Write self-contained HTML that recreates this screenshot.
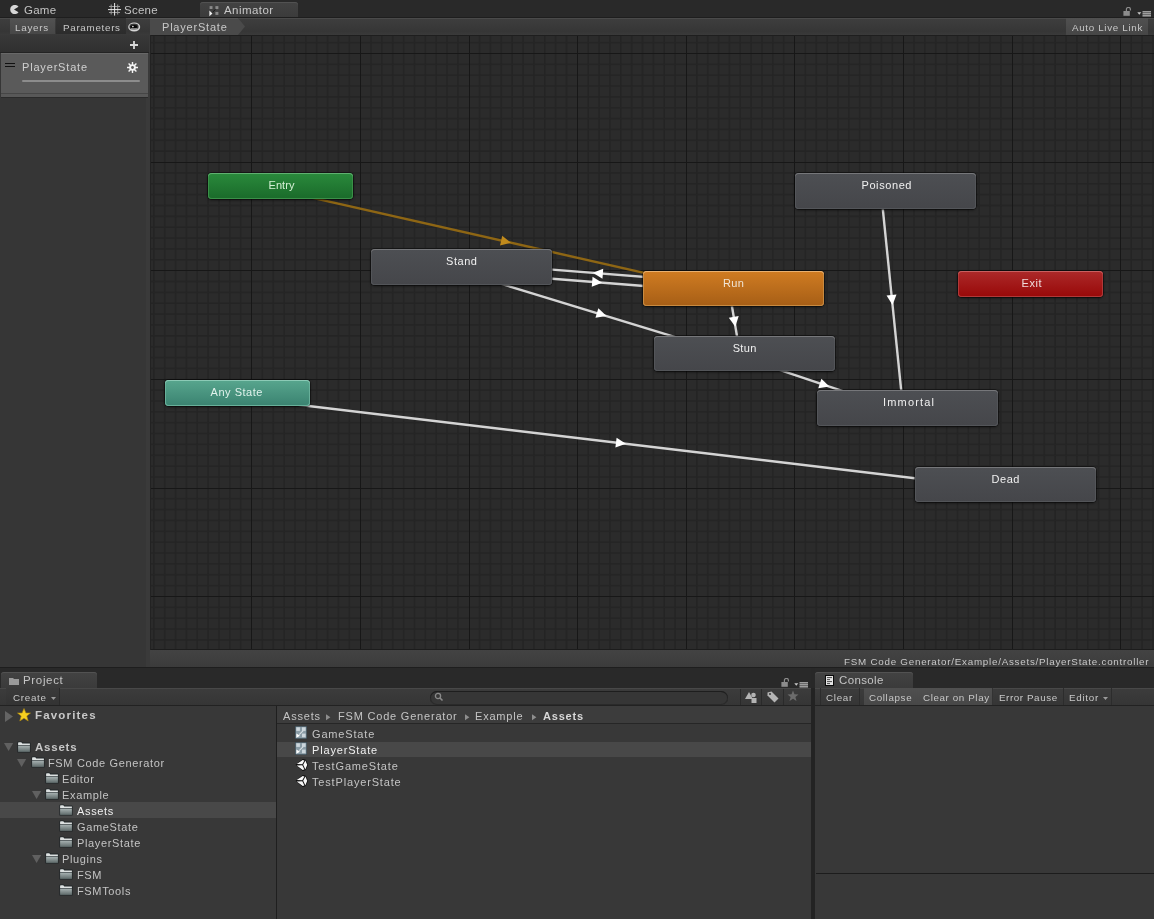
<!DOCTYPE html>
<html><head><meta charset="utf-8"><style>
html,body{margin:0;padding:0;}
body{width:1154px;height:919px;position:relative;overflow:hidden;background:#282828;font-family:"Liberation Sans", sans-serif;}
</style></head><body>
<div style="position:absolute;left:0px;top:0px;width:1154px;height:18px;background:#292929;"></div>
<div style="position:absolute;left:200px;top:2px;width:98px;height:16px;background:linear-gradient(#434343,#3b3b3b);border-radius:3px 3px 0 0;box-shadow:inset 0 1px 0 #525252;"></div>
<svg style="position:absolute;left:9px;top:5px" width="10" height="9" viewBox="0 0 10 9"><path d="M5 4.5 L9.5 1.8 A4.6 4.6 0 1 0 9.5 7.2 Z" fill="#d6d6d6"/></svg>
<div style="position:absolute;left:23.8px;top:4.67px;font-size:11.5px;line-height:11.5px;color:#c4c4c4;font-weight:normal;letter-spacing:0.257px;white-space:nowrap;will-change:transform;">Game</div>
<svg style="position:absolute;left:108px;top:3px" width="13" height="13" viewBox="0 0 13 13" fill="none"><path d="M3.2 1.5V11.5M9.7 1.5V11.5M1 3.5H12M1 9.5H12" stroke="#9a9a9a" stroke-width="1"/><path d="M6.6 0V12.6M0 6.6H13" stroke="#e6e6e6" stroke-width="1"/></svg>
<div style="position:absolute;left:123.7px;top:4.87px;font-size:11.5px;line-height:11.5px;color:#c4c4c4;font-weight:normal;letter-spacing:0.248px;white-space:nowrap;will-change:transform;">Scene</div>
<svg style="position:absolute;left:208.5px;top:6px" width="11" height="11" viewBox="0 0 11 11"><rect x="0.6" y="0.1" width="2.9" height="2.9" fill="#8a8a8a"/><rect x="6.4" y="0.1" width="3" height="3" fill="#8a8a8a"/><rect x="6.4" y="5.9" width="3" height="3" fill="#8a8a8a"/><path d="M6.5 3.4L3.6 6.2" stroke="#111" stroke-width="0.9"/><path d="M0.4 4.6L3.4 7.5L0.4 10.2Z" fill="#f0f0f0"/></svg>
<div style="position:absolute;left:223.8px;top:4.57px;font-size:11.5px;line-height:11.5px;color:#c8c8c8;font-weight:normal;letter-spacing:0.438px;white-space:nowrap;will-change:transform;">Animator</div>
<svg style="position:absolute;left:1123px;top:7px" width="9" height="9" viewBox="0 0 9 9"><path d="M3.4 4V2.4A2 2 0 0 1 7.4 2.4V3.4" stroke="#8c8c8c" stroke-width="1.2" fill="none"/><rect x="0.4" y="4" width="6.4" height="4.8" fill="#8c8c8c"/></svg>
<svg style="position:absolute;left:1137px;top:11px" width="15" height="6" viewBox="0 0 15 6"><path d="M0.3 1.2H4.3L2.3 3.8Z" fill="#c8c8c8"/><rect x="5.5" y="0.3" width="8.5" height="1.1" fill="#d0d0d0"/><rect x="5.5" y="2.3" width="8.5" height="1.1" fill="#d0d0d0"/><rect x="5.5" y="4.3" width="8.5" height="1.1" fill="#d0d0d0"/></svg>
<div style="position:absolute;left:0px;top:18px;width:1154px;height:17px;background:linear-gradient(#3e3e3e,#363636 80%,#3a3a3a);box-shadow:inset 0 1px 0 #4a4a4a;"></div>
<div style="position:absolute;left:0px;top:17px;width:1154px;height:1px;background:#1e1e1e;"></div>
<div style="position:absolute;left:0px;top:35px;width:1154px;height:1px;background:#1e1e1e;"></div>
<div style="position:absolute;left:10px;top:18px;width:45px;height:16px;background:linear-gradient(#525252,#474747);"></div>
<div style="position:absolute;left:15.3px;top:22.70px;font-size:9.8px;line-height:9.8px;color:#c8c8c8;font-weight:normal;letter-spacing:0.759px;white-space:nowrap;will-change:transform;">Layers</div>
<div style="position:absolute;left:56px;top:18px;width:70px;height:16px;background:linear-gradient(#333,#2c2c2c);"></div>
<div style="position:absolute;left:63.4px;top:22.70px;font-size:9.8px;line-height:9.8px;color:#c8c8c8;font-weight:normal;letter-spacing:0.707px;white-space:nowrap;will-change:transform;">Parameters</div>
<svg style="position:absolute;left:127.5px;top:21.5px" width="13" height="10" viewBox="0 0 13 10"><ellipse cx="6.2" cy="5" rx="6" ry="4.6" fill="#d4d4d4"/><ellipse cx="6" cy="4.8" rx="4.6" ry="3.2" fill="#3a3a3a"/><path d="M2.2 4.2Q6 2.4 8.8 3.6L9.3 5.6Q6 6.6 2.6 5.8Z" fill="#050505"/><circle cx="4.9" cy="4.6" r="0.8" fill="#fff"/><path d="M2.8 7H9.6M3.6 8.3H8.8" stroke="#d8d8d8" stroke-width="0.9"/></svg>
<div style="position:absolute;left:126px;top:18px;width:24px;height:16px;background:#2f2f2f;z-index:-1;"></div>
<svg style="position:absolute;left:150px;top:18px" width="96" height="17" viewBox="0 0 96 17"><path d="M0 0H88L95 8.5L88 17H0Z" fill="#4a4a4a"/><path d="M0 0.5H88" stroke="#565656"/></svg>
<div style="position:absolute;left:161.6px;top:21.89px;font-size:11px;line-height:11px;color:#c8c8c8;font-weight:normal;letter-spacing:0.792px;white-space:nowrap;will-change:transform;">PlayerState</div>
<div style="position:absolute;left:1066px;top:18px;width:82px;height:17px;background:linear-gradient(#505050,#464646);"></div>
<div style="position:absolute;left:1072px;top:22.50px;font-size:9.8px;line-height:9.8px;color:#c8c8c8;font-weight:normal;letter-spacing:0.673px;white-space:nowrap;will-change:transform;">Auto Live Link</div>
<div style="position:absolute;left:0px;top:35px;width:150px;height:633px;background:#363636;"></div>
<div style="position:absolute;left:146px;top:35px;width:4px;height:633px;background:#3a3a3a;"></div>
<div style="position:absolute;left:0px;top:35px;width:149px;height:17px;background:linear-gradient(#383838,#303030);"></div>
<div style="position:absolute;left:0px;top:52px;width:149px;height:1px;background:#232323;"></div>
<svg style="position:absolute;left:130px;top:41px" width="8" height="8" viewBox="0 0 8 8"><path d="M4 0V8M0 4H8" stroke="#d8d8d8" stroke-width="1.8"/></svg>
<div style="position:absolute;left:1px;top:53px;width:147px;height:44px;background:#5a5a5a;box-shadow:inset 0 1px 0 #686868;"></div>
<div style="position:absolute;left:1px;top:93px;width:147px;height:1px;background:#464646;"></div>
<div style="position:absolute;left:1px;top:94px;width:147px;height:3px;background:#585858;"></div>
<div style="position:absolute;left:1px;top:97px;width:147px;height:1px;background:#2a2a2a;"></div>
<div style="position:absolute;left:5px;top:63px;width:10px;height:1.2px;background:#111;"></div>
<div style="position:absolute;left:5px;top:65.8px;width:10px;height:1.2px;background:#111;"></div>
<div style="position:absolute;left:22.3px;top:61.99px;font-size:11px;line-height:11px;color:#d0d0d0;font-weight:normal;letter-spacing:0.822px;white-space:nowrap;will-change:transform;">PlayerState</div>
<svg style="position:absolute;left:127px;top:62px" width="11" height="11" viewBox="0 0 11 11"><g stroke="#f4f4f4" stroke-width="1.4"><path d="M5.5 0V11M0 5.5H11M1.6 1.6L9.4 9.4M9.4 1.6L1.6 9.4"/></g><circle cx="5.5" cy="5.5" r="3.3" fill="#f4f4f4"/><circle cx="5.5" cy="5.5" r="1.4" fill="#5a5a5a"/></svg>
<div style="position:absolute;left:22px;top:80px;width:118px;height:2.2px;background:#8c8c8c;border-radius:1px;"></div>
<div style="position:absolute;left:150px;top:35px;width:1px;height:615px;background:#222;"></div>
<svg style="position:absolute;left:150px;top:35px" width="1004" height="615"><rect width="1004" height="615" fill="#2b2b2b"/><rect x="3.06" y="0" width="1.5" height="615" fill="#252525"/><rect x="13.92" y="0" width="1.5" height="615" fill="#252525"/><rect x="24.78" y="0" width="1.5" height="615" fill="#252525"/><rect x="35.64" y="0" width="1.5" height="615" fill="#252525"/><rect x="46.50" y="0" width="1.5" height="615" fill="#252525"/><rect x="57.36" y="0" width="1.5" height="615" fill="#252525"/><rect x="68.22" y="0" width="1.5" height="615" fill="#252525"/><rect x="79.08" y="0" width="1.5" height="615" fill="#252525"/><rect x="89.94" y="0" width="1.5" height="615" fill="#252525"/><rect x="111.66" y="0" width="1.5" height="615" fill="#252525"/><rect x="122.52" y="0" width="1.5" height="615" fill="#252525"/><rect x="133.38" y="0" width="1.5" height="615" fill="#252525"/><rect x="144.24" y="0" width="1.5" height="615" fill="#252525"/><rect x="155.10" y="0" width="1.5" height="615" fill="#252525"/><rect x="165.96" y="0" width="1.5" height="615" fill="#252525"/><rect x="176.82" y="0" width="1.5" height="615" fill="#252525"/><rect x="187.68" y="0" width="1.5" height="615" fill="#252525"/><rect x="198.54" y="0" width="1.5" height="615" fill="#252525"/><rect x="220.26" y="0" width="1.5" height="615" fill="#252525"/><rect x="231.12" y="0" width="1.5" height="615" fill="#252525"/><rect x="241.98" y="0" width="1.5" height="615" fill="#252525"/><rect x="252.84" y="0" width="1.5" height="615" fill="#252525"/><rect x="263.70" y="0" width="1.5" height="615" fill="#252525"/><rect x="274.56" y="0" width="1.5" height="615" fill="#252525"/><rect x="285.42" y="0" width="1.5" height="615" fill="#252525"/><rect x="296.28" y="0" width="1.5" height="615" fill="#252525"/><rect x="307.14" y="0" width="1.5" height="615" fill="#252525"/><rect x="328.86" y="0" width="1.5" height="615" fill="#252525"/><rect x="339.72" y="0" width="1.5" height="615" fill="#252525"/><rect x="350.58" y="0" width="1.5" height="615" fill="#252525"/><rect x="361.44" y="0" width="1.5" height="615" fill="#252525"/><rect x="372.30" y="0" width="1.5" height="615" fill="#252525"/><rect x="383.16" y="0" width="1.5" height="615" fill="#252525"/><rect x="394.02" y="0" width="1.5" height="615" fill="#252525"/><rect x="404.88" y="0" width="1.5" height="615" fill="#252525"/><rect x="415.74" y="0" width="1.5" height="615" fill="#252525"/><rect x="437.46" y="0" width="1.5" height="615" fill="#252525"/><rect x="448.32" y="0" width="1.5" height="615" fill="#252525"/><rect x="459.18" y="0" width="1.5" height="615" fill="#252525"/><rect x="470.04" y="0" width="1.5" height="615" fill="#252525"/><rect x="480.90" y="0" width="1.5" height="615" fill="#252525"/><rect x="491.76" y="0" width="1.5" height="615" fill="#252525"/><rect x="502.62" y="0" width="1.5" height="615" fill="#252525"/><rect x="513.48" y="0" width="1.5" height="615" fill="#252525"/><rect x="524.34" y="0" width="1.5" height="615" fill="#252525"/><rect x="546.06" y="0" width="1.5" height="615" fill="#252525"/><rect x="556.92" y="0" width="1.5" height="615" fill="#252525"/><rect x="567.78" y="0" width="1.5" height="615" fill="#252525"/><rect x="578.64" y="0" width="1.5" height="615" fill="#252525"/><rect x="589.50" y="0" width="1.5" height="615" fill="#252525"/><rect x="600.36" y="0" width="1.5" height="615" fill="#252525"/><rect x="611.22" y="0" width="1.5" height="615" fill="#252525"/><rect x="622.08" y="0" width="1.5" height="615" fill="#252525"/><rect x="632.94" y="0" width="1.5" height="615" fill="#252525"/><rect x="654.66" y="0" width="1.5" height="615" fill="#252525"/><rect x="665.52" y="0" width="1.5" height="615" fill="#252525"/><rect x="676.38" y="0" width="1.5" height="615" fill="#252525"/><rect x="687.24" y="0" width="1.5" height="615" fill="#252525"/><rect x="698.10" y="0" width="1.5" height="615" fill="#252525"/><rect x="708.96" y="0" width="1.5" height="615" fill="#252525"/><rect x="719.82" y="0" width="1.5" height="615" fill="#252525"/><rect x="730.68" y="0" width="1.5" height="615" fill="#252525"/><rect x="741.54" y="0" width="1.5" height="615" fill="#252525"/><rect x="763.26" y="0" width="1.5" height="615" fill="#252525"/><rect x="774.12" y="0" width="1.5" height="615" fill="#252525"/><rect x="784.98" y="0" width="1.5" height="615" fill="#252525"/><rect x="795.84" y="0" width="1.5" height="615" fill="#252525"/><rect x="806.70" y="0" width="1.5" height="615" fill="#252525"/><rect x="817.56" y="0" width="1.5" height="615" fill="#252525"/><rect x="828.42" y="0" width="1.5" height="615" fill="#252525"/><rect x="839.28" y="0" width="1.5" height="615" fill="#252525"/><rect x="850.14" y="0" width="1.5" height="615" fill="#252525"/><rect x="871.86" y="0" width="1.5" height="615" fill="#252525"/><rect x="882.72" y="0" width="1.5" height="615" fill="#252525"/><rect x="893.58" y="0" width="1.5" height="615" fill="#252525"/><rect x="904.44" y="0" width="1.5" height="615" fill="#252525"/><rect x="915.30" y="0" width="1.5" height="615" fill="#252525"/><rect x="926.16" y="0" width="1.5" height="615" fill="#252525"/><rect x="937.02" y="0" width="1.5" height="615" fill="#252525"/><rect x="947.88" y="0" width="1.5" height="615" fill="#252525"/><rect x="958.74" y="0" width="1.5" height="615" fill="#252525"/><rect x="980.46" y="0" width="1.5" height="615" fill="#252525"/><rect x="991.32" y="0" width="1.5" height="615" fill="#252525"/><rect x="1002.18" y="0" width="1.5" height="615" fill="#252525"/><rect x="0" y="6.84" width="1004" height="1.5" fill="#252525"/><rect x="0" y="28.56" width="1004" height="1.5" fill="#252525"/><rect x="0" y="39.42" width="1004" height="1.5" fill="#252525"/><rect x="0" y="50.28" width="1004" height="1.5" fill="#252525"/><rect x="0" y="61.14" width="1004" height="1.5" fill="#252525"/><rect x="0" y="72.00" width="1004" height="1.5" fill="#252525"/><rect x="0" y="82.86" width="1004" height="1.5" fill="#252525"/><rect x="0" y="93.72" width="1004" height="1.5" fill="#252525"/><rect x="0" y="104.58" width="1004" height="1.5" fill="#252525"/><rect x="0" y="115.44" width="1004" height="1.5" fill="#252525"/><rect x="0" y="137.16" width="1004" height="1.5" fill="#252525"/><rect x="0" y="148.02" width="1004" height="1.5" fill="#252525"/><rect x="0" y="158.88" width="1004" height="1.5" fill="#252525"/><rect x="0" y="169.74" width="1004" height="1.5" fill="#252525"/><rect x="0" y="180.60" width="1004" height="1.5" fill="#252525"/><rect x="0" y="191.46" width="1004" height="1.5" fill="#252525"/><rect x="0" y="202.32" width="1004" height="1.5" fill="#252525"/><rect x="0" y="213.18" width="1004" height="1.5" fill="#252525"/><rect x="0" y="224.04" width="1004" height="1.5" fill="#252525"/><rect x="0" y="245.76" width="1004" height="1.5" fill="#252525"/><rect x="0" y="256.62" width="1004" height="1.5" fill="#252525"/><rect x="0" y="267.48" width="1004" height="1.5" fill="#252525"/><rect x="0" y="278.34" width="1004" height="1.5" fill="#252525"/><rect x="0" y="289.20" width="1004" height="1.5" fill="#252525"/><rect x="0" y="300.06" width="1004" height="1.5" fill="#252525"/><rect x="0" y="310.92" width="1004" height="1.5" fill="#252525"/><rect x="0" y="321.78" width="1004" height="1.5" fill="#252525"/><rect x="0" y="332.64" width="1004" height="1.5" fill="#252525"/><rect x="0" y="354.36" width="1004" height="1.5" fill="#252525"/><rect x="0" y="365.22" width="1004" height="1.5" fill="#252525"/><rect x="0" y="376.08" width="1004" height="1.5" fill="#252525"/><rect x="0" y="386.94" width="1004" height="1.5" fill="#252525"/><rect x="0" y="397.80" width="1004" height="1.5" fill="#252525"/><rect x="0" y="408.66" width="1004" height="1.5" fill="#252525"/><rect x="0" y="419.52" width="1004" height="1.5" fill="#252525"/><rect x="0" y="430.38" width="1004" height="1.5" fill="#252525"/><rect x="0" y="441.24" width="1004" height="1.5" fill="#252525"/><rect x="0" y="462.96" width="1004" height="1.5" fill="#252525"/><rect x="0" y="473.82" width="1004" height="1.5" fill="#252525"/><rect x="0" y="484.68" width="1004" height="1.5" fill="#252525"/><rect x="0" y="495.54" width="1004" height="1.5" fill="#252525"/><rect x="0" y="506.40" width="1004" height="1.5" fill="#252525"/><rect x="0" y="517.26" width="1004" height="1.5" fill="#252525"/><rect x="0" y="528.12" width="1004" height="1.5" fill="#252525"/><rect x="0" y="538.98" width="1004" height="1.5" fill="#252525"/><rect x="0" y="549.84" width="1004" height="1.5" fill="#252525"/><rect x="0" y="571.56" width="1004" height="1.5" fill="#252525"/><rect x="0" y="582.42" width="1004" height="1.5" fill="#252525"/><rect x="0" y="593.28" width="1004" height="1.5" fill="#252525"/><rect x="0" y="604.14" width="1004" height="1.5" fill="#252525"/><rect x="101" y="0" width="1" height="615" fill="#171717"/><rect x="210" y="0" width="1" height="615" fill="#171717"/><rect x="319" y="0" width="1" height="615" fill="#171717"/><rect x="427" y="0" width="1" height="615" fill="#171717"/><rect x="536" y="0" width="1" height="615" fill="#171717"/><rect x="644" y="0" width="1" height="615" fill="#171717"/><rect x="753" y="0" width="1" height="615" fill="#171717"/><rect x="862" y="0" width="1" height="615" fill="#171717"/><rect x="970" y="0" width="1" height="615" fill="#171717"/><rect x="0" y="18" width="1004" height="1" fill="#171717"/><rect x="0" y="127" width="1004" height="1" fill="#171717"/><rect x="0" y="235" width="1004" height="1" fill="#171717"/><rect x="0" y="344" width="1004" height="1" fill="#171717"/><rect x="0" y="453" width="1004" height="1" fill="#171717"/><rect x="0" y="561" width="1004" height="1" fill="#171717"/><rect x="0" y="614" width="1004" height="1" fill="#1c1c1c"/><rect x="0" y="0" width="1004" height="1" fill="#1e1e1e"/><rect x="0" y="0" width="1" height="615" fill="#222"/><line x1="129.51" y1="155.39" x2="582.51" y2="257.89" stroke="#8e6614" stroke-width="2.4"/><path d="M360.88 207.74L350.03 210.41L352.23 200.66Z" fill="#c08a1c"/><line x1="311.15" y1="236.49" x2="583.15" y2="257.99" stroke="#d4d4d4" stroke-width="2.4"/><path d="M452.13 247.63L441.77 251.83L442.55 241.86Z" fill="#ffffff"/><line x1="583.85" y1="249.01" x2="311.85" y2="227.51" stroke="#d4d4d4" stroke-width="2.4"/><path d="M442.87 237.87L453.23 233.67L452.45 243.64Z" fill="#ffffff"/><line x1="310.18" y1="236.30" x2="593.18" y2="322.80" stroke="#d4d4d4" stroke-width="2.4"/><path d="M456.47 281.01L445.44 282.87L448.36 273.31Z" fill="#ffffff"/><line x1="579.06" y1="254.25" x2="590.06" y2="319.25" stroke="#d4d4d4" stroke-width="2.4"/><path d="M585.40 291.68L578.80 282.66L588.66 280.99Z" fill="#ffffff"/><line x1="593.07" y1="322.77" x2="756.07" y2="377.27" stroke="#d4d4d4" stroke-width="2.4"/><path d="M679.32 351.60L668.25 353.17L671.42 343.69Z" fill="#ffffff"/><line x1="731.02" y1="156.45" x2="753.02" y2="373.45" stroke="#d4d4d4" stroke-width="2.4"/><path d="M742.53 269.93L736.54 260.48L746.49 259.48Z" fill="#ffffff"/><line x1="86.97" y1="362.47" x2="854.97" y2="453.97" stroke="#d4d4d4" stroke-width="2.4"/><path d="M475.93 408.81L465.41 412.59L466.59 402.66Z" fill="#ffffff"/></svg>
<div style="position:absolute;left:208px;top:173px;width:145px;height:26px;background:linear-gradient(#2a8a3c,#1a6a2a);border-radius:4px;box-shadow:0 0 0 1px rgba(0,0,0,0.35),0 1px 3px rgba(0,0,0,0.6),inset 0 1px 0 #60b070,inset 1px 0 0 #3a9048,inset -1px 0 0 #3a9048,inset 0 -1px 0 #3a9048;"></div>
<div style="position:absolute;left:208.9px;width:145px;top:179.99px;font-size:11px;line-height:11px;color:#d4f0d4;font-weight:normal;letter-spacing:0.053px;white-space:nowrap;will-change:transform;text-align:center;text-indent:0.053px;">Entry</div>
<div style="position:absolute;left:165px;top:380px;width:145px;height:26px;background:linear-gradient(#58a68e,#3a8270);border-radius:4px;box-shadow:0 0 0 1px rgba(0,0,0,0.35),0 1px 3px rgba(0,0,0,0.6),inset 0 1px 0 #8ccab6,inset 1px 0 0 #68b09a,inset -1px 0 0 #68b09a,inset 0 -1px 0 #68b09a;"></div>
<div style="position:absolute;left:164.0px;width:145px;top:386.99px;font-size:11px;line-height:11px;color:#e0f2ec;font-weight:normal;letter-spacing:0.525px;white-space:nowrap;will-change:transform;text-align:center;text-indent:0.525px;">Any State</div>
<div style="position:absolute;left:958px;top:271px;width:145px;height:26px;background:linear-gradient(#ac2a2a,#980808);border-radius:4px;box-shadow:0 0 0 1px rgba(0,0,0,0.35),0 1px 3px rgba(0,0,0,0.6),inset 0 1px 0 #c86060,inset 1px 0 0 #b03838,inset -1px 0 0 #b03838,inset 0 -1px 0 #b03838;"></div>
<div style="position:absolute;left:958.9px;width:145px;top:277.99px;font-size:11px;line-height:11px;color:#f0dcdc;font-weight:normal;letter-spacing:0.552px;white-space:nowrap;will-change:transform;text-align:center;text-indent:0.552px;">Exit</div>
<div style="position:absolute;left:371px;top:249px;width:181px;height:36px;background:linear-gradient(#4d4f53,#45464a);border-radius:4px;box-shadow:0 0 0 1px rgba(0,0,0,0.35),0 1px 3px rgba(0,0,0,0.6),inset 0 1px 0 #76777a,inset 1px 0 0 #535559,inset -1px 0 0 #535559,inset 0 -1px 0 #535559;"></div>
<div style="position:absolute;left:371px;width:181px;top:255.99px;font-size:11px;line-height:11px;color:#f0f0f0;font-weight:normal;letter-spacing:0.537px;white-space:nowrap;will-change:transform;text-align:center;text-indent:0.537px;">Stand</div>
<div style="position:absolute;left:643px;top:271px;width:181px;height:35px;background:linear-gradient(#d07c22,#a65e16);border-radius:4px;box-shadow:0 0 0 1px rgba(0,0,0,0.35),0 1px 3px rgba(0,0,0,0.6),inset 0 1px 0 #e8b070,inset 1px 0 0 #c88a40,inset -1px 0 0 #c88a40,inset 0 -1px 0 #c88a40;"></div>
<div style="position:absolute;left:643px;width:181px;top:277.99px;font-size:11px;line-height:11px;color:#f0e4d4;font-weight:normal;letter-spacing:0.406px;white-space:nowrap;will-change:transform;text-align:center;text-indent:0.406px;">Run</div>
<div style="position:absolute;left:654px;top:336px;width:181px;height:35px;background:linear-gradient(#4d4f53,#45464a);border-radius:4px;box-shadow:0 0 0 1px rgba(0,0,0,0.35),0 1px 3px rgba(0,0,0,0.6),inset 0 1px 0 #76777a,inset 1px 0 0 #535559,inset -1px 0 0 #535559,inset 0 -1px 0 #535559;"></div>
<div style="position:absolute;left:654px;width:181px;top:342.99px;font-size:11px;line-height:11px;color:#f0f0f0;font-weight:normal;letter-spacing:0.32px;white-space:nowrap;will-change:transform;text-align:center;text-indent:0.32px;">Stun</div>
<div style="position:absolute;left:795px;top:173px;width:181px;height:36px;background:linear-gradient(#4d4f53,#45464a);border-radius:4px;box-shadow:0 0 0 1px rgba(0,0,0,0.35),0 1px 3px rgba(0,0,0,0.6),inset 0 1px 0 #76777a,inset 1px 0 0 #535559,inset -1px 0 0 #535559,inset 0 -1px 0 #535559;"></div>
<div style="position:absolute;left:796.0px;width:181px;top:179.99px;font-size:11px;line-height:11px;color:#f0f0f0;font-weight:normal;letter-spacing:0.589px;white-space:nowrap;will-change:transform;text-align:center;text-indent:0.589px;">Poisoned</div>
<div style="position:absolute;left:817px;top:390px;width:181px;height:36px;background:linear-gradient(#4d4f53,#45464a);border-radius:4px;box-shadow:0 0 0 1px rgba(0,0,0,0.35),0 1px 3px rgba(0,0,0,0.6),inset 0 1px 0 #76777a,inset 1px 0 0 #535559,inset -1px 0 0 #535559,inset 0 -1px 0 #535559;"></div>
<div style="position:absolute;left:817.8px;width:181px;top:396.99px;font-size:11px;line-height:11px;color:#f0f0f0;font-weight:normal;letter-spacing:1.174px;white-space:nowrap;will-change:transform;text-align:center;text-indent:1.174px;">Immortal</div>
<div style="position:absolute;left:915px;top:467px;width:181px;height:35px;background:linear-gradient(#4d4f53,#45464a);border-radius:4px;box-shadow:0 0 0 1px rgba(0,0,0,0.35),0 1px 3px rgba(0,0,0,0.6),inset 0 1px 0 #76777a,inset 1px 0 0 #535559,inset -1px 0 0 #535559,inset 0 -1px 0 #535559;"></div>
<div style="position:absolute;left:915px;width:181px;top:473.99px;font-size:11px;line-height:11px;color:#f0f0f0;font-weight:normal;letter-spacing:0.534px;white-space:nowrap;will-change:transform;text-align:center;text-indent:0.534px;">Dead</div>
<div style="position:absolute;left:150px;top:650px;width:1004px;height:18px;background:linear-gradient(#434343,#3b3b3b);"></div>
<div style="position:absolute;right:5.144px;top:656.70px;font-size:9.8px;line-height:9.8px;color:#c8c8c8;font-weight:normal;letter-spacing:0.756px;white-space:nowrap;will-change:transform;text-align:right;">FSM Code Generator/Example/Assets/PlayerState.controller</div>
<div style="position:absolute;left:0px;top:668px;width:1154px;height:20px;background:#292929;"></div>
<div style="position:absolute;left:0px;top:667px;width:1154px;height:1px;background:#1e1e1e;"></div>
<div style="position:absolute;left:1px;top:672px;width:96px;height:16px;background:linear-gradient(#434343,#3b3b3b);border-radius:3px 3px 0 0;box-shadow:inset 0 1px 0 #525252;"></div>
<svg style="position:absolute;left:9px;top:677px" width="10" height="8" viewBox="0 0 10 8"><path d="M0 1H4L5 2H10V8H0Z" fill="#9a9a9a"/></svg>
<div style="position:absolute;left:23.4px;top:674.97px;font-size:11.5px;line-height:11.5px;color:#c4c4c4;font-weight:normal;letter-spacing:0.667px;white-space:nowrap;will-change:transform;">Project</div>
<div style="position:absolute;left:815px;top:672px;width:98px;height:16px;background:linear-gradient(#434343,#3b3b3b);border-radius:3px 3px 0 0;box-shadow:inset 0 1px 0 #525252;"></div>
<svg style="position:absolute;left:825px;top:675px" width="9" height="11" viewBox="0 0 9 11"><rect x="0" y="0" width="9" height="11" fill="#0a0a0a"/><rect x="1" y="1" width="7" height="9" fill="#e4e4e4"/><path d="M2 2.6H7M2 4.6H5M2 6.6H7M2 8.6H5" stroke="#3a3a3a" stroke-width="0.9"/></svg>
<div style="position:absolute;left:838.6px;top:675.17px;font-size:11.5px;line-height:11.5px;color:#c4c4c4;font-weight:normal;letter-spacing:0.366px;white-space:nowrap;will-change:transform;">Console</div>
<svg style="position:absolute;left:781px;top:678px" width="9" height="9" viewBox="0 0 9 9"><path d="M3.4 4V2.4A2 2 0 0 1 7.4 2.4V3.4" stroke="#8c8c8c" stroke-width="1.2" fill="none"/><rect x="0.4" y="4" width="6.4" height="4.8" fill="#8c8c8c"/></svg>
<svg style="position:absolute;left:794px;top:682px" width="15" height="6" viewBox="0 0 15 6"><path d="M0.3 1.2H4.3L2.3 3.8Z" fill="#c8c8c8"/><rect x="5.5" y="0.3" width="8.5" height="1.1" fill="#d0d0d0"/><rect x="5.5" y="2.3" width="8.5" height="1.1" fill="#d0d0d0"/><rect x="5.5" y="4.3" width="8.5" height="1.1" fill="#d0d0d0"/></svg>
<div style="position:absolute;left:0px;top:688px;width:811px;height:18px;background:linear-gradient(#3c3c3c,#353535);box-shadow:inset 0 1px 0 #484848;"></div>
<div style="position:absolute;left:0px;top:705px;width:811px;height:1px;background:#222;"></div>
<div style="position:absolute;left:6px;top:688px;width:53px;height:17px;background:linear-gradient(#3a3a3a,#333);border-right:1px solid #2a2a2a;"></div>
<div style="position:absolute;left:12.5px;top:693.40px;font-size:9.8px;line-height:9.8px;color:#c8c8c8;font-weight:normal;letter-spacing:0.719px;white-space:nowrap;will-change:transform;">Create</div>
<svg style="position:absolute;left:51px;top:697px" width="5" height="3" viewBox="0 0 5 3"><path d="M0 0H5L2.5 3Z" fill="#9a9a9a"/></svg>
<div style="position:absolute;left:430px;top:691px;width:298px;height:14px;background:#363636;border-radius:7px;box-shadow:inset 0 1px 0 #1e1e1e,inset 0 0 0 1px #2a2a2a;"></div>
<svg style="position:absolute;left:434px;top:692px" width="10" height="10" viewBox="0 0 10 10"><circle cx="4" cy="4" r="2.6" stroke="#8a8a8a" stroke-width="1.3" fill="none"/><path d="M6 6L8.5 8.5" stroke="#8a8a8a" stroke-width="1.6"/></svg>
<div style="position:absolute;left:740px;top:689px;width:1px;height:16px;background:#2a2a2a;"></div>
<div style="position:absolute;left:761px;top:689px;width:1px;height:16px;background:#2a2a2a;"></div>
<div style="position:absolute;left:783px;top:689px;width:1px;height:16px;background:#2a2a2a;"></div>
<svg style="position:absolute;left:745px;top:691px" width="12" height="12" viewBox="0 0 12 12"><path d="M4 1L0 8H8Z" fill="#b4b4b4"/><circle cx="8.5" cy="4" r="2.3" fill="#b4b4b4"/><rect x="6.5" y="7" width="5" height="5" fill="#b4b4b4"/></svg>
<svg style="position:absolute;left:767px;top:691px" width="12" height="12" viewBox="0 0 12 12"><path d="M0.5 1.5L4.5 0.5L11.5 7.5L7.5 11.5L0.5 4.5Z" fill="#b4b4b4"/><circle cx="3" cy="3" r="1" fill="#3a3a3a"/></svg>
<svg style="position:absolute;left:787px;top:690px" width="12" height="12" viewBox="0 0 12 12"><path d="M6 0.5L7.5 4.3L11.5 4.5L8.4 7L9.5 11L6 8.7L2.5 11L3.6 7L0.5 4.5L4.5 4.3Z" fill="#6c6c6c"/></svg>
<div style="position:absolute;left:0px;top:706px;width:276px;height:213px;background:#383838;"></div>
<div style="position:absolute;left:276px;top:706px;width:1px;height:213px;background:#1f1f1f;"></div>
<svg width="0" height="0" style="position:absolute"><defs><linearGradient id="fg" x1="0" y1="0" x2="0" y2="1"><stop offset="0" stop-color="#a8b2b2"/><stop offset="1" stop-color="#5e6a6a"/></linearGradient></defs></svg>
<svg style="position:absolute;left:5px;top:711px" width="9" height="11" viewBox="0 0 9 11"><path d="M0 0L8 5.5L0 11Z" fill="#646464"/></svg>
<svg style="position:absolute;left:17px;top:708px" width="14" height="14" viewBox="0 0 14 14"><path d="M7 0.5L8.9 5H13.5L9.8 8L11.2 13L7 10.2L2.8 13L4.2 8L0.5 5H5.1Z" fill="#f6d020" stroke="#b08a10" stroke-width="0.6"/></svg>
<div style="position:absolute;left:34.7px;top:710.47px;font-size:11.5px;line-height:11.5px;color:#c8c8c8;font-weight:bold;letter-spacing:1.182px;white-space:nowrap;will-change:transform;">Favorites</div>
<svg style="position:absolute;left:3.5px;top:743.2px" width="10" height="9" viewBox="0 0 10 9"><path d="M0 0H9.2L4.6 8Z" fill="#606060"/></svg>
<svg style="position:absolute;left:16.8px;top:740.5px" width="14" height="12" viewBox="0 0 14 12"><path d="M0.4 1.8Q0.4 0.6 1.6 0.6H4.6L5.6 1.6H12.6Q13.6 1.6 13.6 2.6V11.6H0.4Z" fill="#1e2426"/><path d="M1.1 1.9Q1.1 1.3 1.8 1.3H4.3L5.3 2.4H12.9V4H1.1Z" fill="#dde1e1"/><rect x="1.1" y="4" width="11.8" height="0.7" fill="#4a5456"/><rect x="1.1" y="4.7" width="11.8" height="6.2" fill="url(#fg)"/></svg>
<div style="position:absolute;left:34.7px;top:741.77px;font-size:11.5px;line-height:11.5px;color:#c8c8c8;font-weight:bold;letter-spacing:0.776px;white-space:nowrap;will-change:transform;">Assets</div>
<div style="position:absolute;left:0px;top:802px;width:276px;height:16px;background:#484848;"></div>
<svg style="position:absolute;left:17.3px;top:759.2px" width="10" height="9" viewBox="0 0 10 9"><path d="M0 0H9.2L4.6 8Z" fill="#606060"/></svg>
<svg style="position:absolute;left:30.7px;top:756.2px" width="14" height="12" viewBox="0 0 14 12"><path d="M0.4 1.8Q0.4 0.6 1.6 0.6H4.6L5.6 1.6H12.6Q13.6 1.6 13.6 2.6V11.6H0.4Z" fill="#1e2426"/><path d="M1.1 1.9Q1.1 1.3 1.8 1.3H4.3L5.3 2.4H12.9V4H1.1Z" fill="#dde1e1"/><rect x="1.1" y="4" width="11.8" height="0.7" fill="#4a5456"/><rect x="1.1" y="4.7" width="11.8" height="6.2" fill="url(#fg)"/></svg>
<div style="position:absolute;left:48px;top:757.69px;font-size:11px;line-height:11px;color:#c4c4c4;font-weight:normal;letter-spacing:0.65px;white-space:nowrap;will-change:transform;">FSM Code Generator</div>
<svg style="position:absolute;left:44.7px;top:772.2px" width="14" height="12" viewBox="0 0 14 12"><path d="M0.4 1.8Q0.4 0.6 1.6 0.6H4.6L5.6 1.6H12.6Q13.6 1.6 13.6 2.6V11.6H0.4Z" fill="#1e2426"/><path d="M1.1 1.9Q1.1 1.3 1.8 1.3H4.3L5.3 2.4H12.9V4H1.1Z" fill="#dde1e1"/><rect x="1.1" y="4" width="11.8" height="0.7" fill="#4a5456"/><rect x="1.1" y="4.7" width="11.8" height="6.2" fill="url(#fg)"/></svg>
<div style="position:absolute;left:62px;top:773.69px;font-size:11px;line-height:11px;color:#c4c4c4;font-weight:normal;letter-spacing:0.65px;white-space:nowrap;will-change:transform;">Editor</div>
<svg style="position:absolute;left:32.3px;top:791.2px" width="10" height="9" viewBox="0 0 10 9"><path d="M0 0H9.2L4.6 8Z" fill="#606060"/></svg>
<svg style="position:absolute;left:44.7px;top:788.2px" width="14" height="12" viewBox="0 0 14 12"><path d="M0.4 1.8Q0.4 0.6 1.6 0.6H4.6L5.6 1.6H12.6Q13.6 1.6 13.6 2.6V11.6H0.4Z" fill="#1e2426"/><path d="M1.1 1.9Q1.1 1.3 1.8 1.3H4.3L5.3 2.4H12.9V4H1.1Z" fill="#dde1e1"/><rect x="1.1" y="4" width="11.8" height="0.7" fill="#4a5456"/><rect x="1.1" y="4.7" width="11.8" height="6.2" fill="url(#fg)"/></svg>
<div style="position:absolute;left:62px;top:789.69px;font-size:11px;line-height:11px;color:#c4c4c4;font-weight:normal;letter-spacing:0.65px;white-space:nowrap;will-change:transform;">Example</div>
<svg style="position:absolute;left:58.7px;top:804.2px" width="14" height="12" viewBox="0 0 14 12"><path d="M0.4 1.8Q0.4 0.6 1.6 0.6H4.6L5.6 1.6H12.6Q13.6 1.6 13.6 2.6V11.6H0.4Z" fill="#1e2426"/><path d="M1.1 1.9Q1.1 1.3 1.8 1.3H4.3L5.3 2.4H12.9V4H1.1Z" fill="#dde1e1"/><rect x="1.1" y="4" width="11.8" height="0.7" fill="#4a5456"/><rect x="1.1" y="4.7" width="11.8" height="6.2" fill="url(#fg)"/></svg>
<div style="position:absolute;left:77px;top:805.69px;font-size:11px;line-height:11px;color:#f0f0f0;font-weight:normal;letter-spacing:0.65px;white-space:nowrap;will-change:transform;">Assets</div>
<svg style="position:absolute;left:58.7px;top:820.2px" width="14" height="12" viewBox="0 0 14 12"><path d="M0.4 1.8Q0.4 0.6 1.6 0.6H4.6L5.6 1.6H12.6Q13.6 1.6 13.6 2.6V11.6H0.4Z" fill="#1e2426"/><path d="M1.1 1.9Q1.1 1.3 1.8 1.3H4.3L5.3 2.4H12.9V4H1.1Z" fill="#dde1e1"/><rect x="1.1" y="4" width="11.8" height="0.7" fill="#4a5456"/><rect x="1.1" y="4.7" width="11.8" height="6.2" fill="url(#fg)"/></svg>
<div style="position:absolute;left:77px;top:821.69px;font-size:11px;line-height:11px;color:#c4c4c4;font-weight:normal;letter-spacing:0.65px;white-space:nowrap;will-change:transform;">GameState</div>
<svg style="position:absolute;left:58.7px;top:836.2px" width="14" height="12" viewBox="0 0 14 12"><path d="M0.4 1.8Q0.4 0.6 1.6 0.6H4.6L5.6 1.6H12.6Q13.6 1.6 13.6 2.6V11.6H0.4Z" fill="#1e2426"/><path d="M1.1 1.9Q1.1 1.3 1.8 1.3H4.3L5.3 2.4H12.9V4H1.1Z" fill="#dde1e1"/><rect x="1.1" y="4" width="11.8" height="0.7" fill="#4a5456"/><rect x="1.1" y="4.7" width="11.8" height="6.2" fill="url(#fg)"/></svg>
<div style="position:absolute;left:77px;top:837.69px;font-size:11px;line-height:11px;color:#c4c4c4;font-weight:normal;letter-spacing:0.65px;white-space:nowrap;will-change:transform;">PlayerState</div>
<svg style="position:absolute;left:32.3px;top:855.2px" width="10" height="9" viewBox="0 0 10 9"><path d="M0 0H9.2L4.6 8Z" fill="#606060"/></svg>
<svg style="position:absolute;left:44.7px;top:852.2px" width="14" height="12" viewBox="0 0 14 12"><path d="M0.4 1.8Q0.4 0.6 1.6 0.6H4.6L5.6 1.6H12.6Q13.6 1.6 13.6 2.6V11.6H0.4Z" fill="#1e2426"/><path d="M1.1 1.9Q1.1 1.3 1.8 1.3H4.3L5.3 2.4H12.9V4H1.1Z" fill="#dde1e1"/><rect x="1.1" y="4" width="11.8" height="0.7" fill="#4a5456"/><rect x="1.1" y="4.7" width="11.8" height="6.2" fill="url(#fg)"/></svg>
<div style="position:absolute;left:62px;top:853.69px;font-size:11px;line-height:11px;color:#c4c4c4;font-weight:normal;letter-spacing:0.65px;white-space:nowrap;will-change:transform;">Plugins</div>
<svg style="position:absolute;left:58.7px;top:868.2px" width="14" height="12" viewBox="0 0 14 12"><path d="M0.4 1.8Q0.4 0.6 1.6 0.6H4.6L5.6 1.6H12.6Q13.6 1.6 13.6 2.6V11.6H0.4Z" fill="#1e2426"/><path d="M1.1 1.9Q1.1 1.3 1.8 1.3H4.3L5.3 2.4H12.9V4H1.1Z" fill="#dde1e1"/><rect x="1.1" y="4" width="11.8" height="0.7" fill="#4a5456"/><rect x="1.1" y="4.7" width="11.8" height="6.2" fill="url(#fg)"/></svg>
<div style="position:absolute;left:77px;top:869.69px;font-size:11px;line-height:11px;color:#c4c4c4;font-weight:normal;letter-spacing:0.65px;white-space:nowrap;will-change:transform;">FSM</div>
<svg style="position:absolute;left:58.7px;top:884.2px" width="14" height="12" viewBox="0 0 14 12"><path d="M0.4 1.8Q0.4 0.6 1.6 0.6H4.6L5.6 1.6H12.6Q13.6 1.6 13.6 2.6V11.6H0.4Z" fill="#1e2426"/><path d="M1.1 1.9Q1.1 1.3 1.8 1.3H4.3L5.3 2.4H12.9V4H1.1Z" fill="#dde1e1"/><rect x="1.1" y="4" width="11.8" height="0.7" fill="#4a5456"/><rect x="1.1" y="4.7" width="11.8" height="6.2" fill="url(#fg)"/></svg>
<div style="position:absolute;left:77px;top:885.69px;font-size:11px;line-height:11px;color:#c4c4c4;font-weight:normal;letter-spacing:0.65px;white-space:nowrap;will-change:transform;">FSMTools</div>
<div style="position:absolute;left:277px;top:706px;width:534px;height:213px;background:#383838;"></div>
<div style="position:absolute;left:277px;top:706px;width:534px;height:18px;background:#3c3c3c;"></div>
<div style="position:absolute;left:277px;top:723px;width:534px;height:1px;background:#262626;"></div>
<div style="position:absolute;left:283.3px;top:710.69px;font-size:11px;line-height:11px;color:#c4c4c4;font-weight:normal;letter-spacing:0.8px;white-space:nowrap;will-change:transform;">Assets</div>
<div style="position:absolute;left:338px;top:710.69px;font-size:11px;line-height:11px;color:#c4c4c4;font-weight:normal;letter-spacing:0.8px;white-space:nowrap;will-change:transform;">FSM Code Generator</div>
<div style="position:absolute;left:475px;top:710.69px;font-size:11px;line-height:11px;color:#c4c4c4;font-weight:normal;letter-spacing:0.8px;white-space:nowrap;will-change:transform;">Example</div>
<div style="position:absolute;left:542.5px;top:710.69px;font-size:11px;line-height:11px;color:#d8d8d8;font-weight:bold;letter-spacing:0.8px;white-space:nowrap;will-change:transform;">Assets</div>
<svg style="position:absolute;left:326px;top:713.5px" width="5" height="7" viewBox="0 0 5 7"><path d="M0 0.3L4.4 3.3L0 6.3Z" fill="#8e8e8e"/></svg>
<svg style="position:absolute;left:464.5px;top:713.5px" width="5" height="7" viewBox="0 0 5 7"><path d="M0 0.3L4.4 3.3L0 6.3Z" fill="#8e8e8e"/></svg>
<svg style="position:absolute;left:531.5px;top:713.5px" width="5" height="7" viewBox="0 0 5 7"><path d="M0 0.3L4.4 3.3L0 6.3Z" fill="#8e8e8e"/></svg>
<div style="position:absolute;left:277px;top:742px;width:534px;height:15px;background:#484848;"></div>
<svg style="position:absolute;left:295px;top:726px" width="12" height="13" viewBox="0 0 12 13"><rect x="0" y="0" width="12" height="13" fill="#34444c"/><rect x="0.7" y="0.7" width="10.6" height="11.6" fill="#8a9ca6"/><rect x="1.3" y="1.3" width="3.6" height="3.6" fill="#ccd6dc"/><rect x="7" y="1.3" width="3.6" height="3.6" fill="#ccd6dc"/><rect x="7" y="7.6" width="3.6" height="3.6" fill="#ccd6dc"/><path d="M8.2 4.6L4.2 8.6" stroke="#d8e0e4" stroke-width="1.1"/><path d="M1.4 7.6L5 9.7L1.4 11.8Z" fill="#ffffff"/></svg>
<div style="position:absolute;left:311.5px;top:729.09px;font-size:11px;line-height:11px;color:#c4c4c4;font-weight:normal;letter-spacing:0.83px;white-space:nowrap;will-change:transform;">GameState</div>
<svg style="position:absolute;left:295px;top:742px" width="12" height="13" viewBox="0 0 12 13"><rect x="0" y="0" width="12" height="13" fill="#34444c"/><rect x="0.7" y="0.7" width="10.6" height="11.6" fill="#8a9ca6"/><rect x="1.3" y="1.3" width="3.6" height="3.6" fill="#ccd6dc"/><rect x="7" y="1.3" width="3.6" height="3.6" fill="#ccd6dc"/><rect x="7" y="7.6" width="3.6" height="3.6" fill="#ccd6dc"/><path d="M8.2 4.6L4.2 8.6" stroke="#d8e0e4" stroke-width="1.1"/><path d="M1.4 7.6L5 9.7L1.4 11.8Z" fill="#ffffff"/></svg>
<div style="position:absolute;left:311.5px;top:744.99px;font-size:11px;line-height:11px;color:#f0f0f0;font-weight:normal;letter-spacing:0.83px;white-space:nowrap;will-change:transform;">PlayerState</div>
<svg style="position:absolute;left:293px;top:757px" width="16" height="16" viewBox="0 0 16 16"><path d="M2.6 7.7L9.8 2.1L12.8 2.7L15.1 7.8L12.8 13.1L9.8 13.9Z" fill="#0e0e0e"/><g fill="#f8f8f8"><path d="M3.7 7.1L9.7 3.0L11.4 3.4L9.3 7.3Z"/><path d="M3.7 8.4L9.3 8.2L11.4 12.6L9.7 13.0Z"/><path d="M10.2 7.75L12.4 3.6L14.2 7.8L12.4 12.4Z"/></g></svg>
<div style="position:absolute;left:311.5px;top:760.89px;font-size:11px;line-height:11px;color:#c4c4c4;font-weight:normal;letter-spacing:0.83px;white-space:nowrap;will-change:transform;">TestGameState</div>
<svg style="position:absolute;left:293px;top:773px" width="16" height="16" viewBox="0 0 16 16"><path d="M2.6 7.7L9.8 2.1L12.8 2.7L15.1 7.8L12.8 13.1L9.8 13.9Z" fill="#0e0e0e"/><g fill="#f8f8f8"><path d="M3.7 7.1L9.7 3.0L11.4 3.4L9.3 7.3Z"/><path d="M3.7 8.4L9.3 8.2L11.4 12.6L9.7 13.0Z"/><path d="M10.2 7.75L12.4 3.6L14.2 7.8L12.4 12.4Z"/></g></svg>
<div style="position:absolute;left:311.5px;top:776.89px;font-size:11px;line-height:11px;color:#c4c4c4;font-weight:normal;letter-spacing:0.83px;white-space:nowrap;will-change:transform;">TestPlayerState</div>
<div style="position:absolute;left:811px;top:688px;width:4px;height:231px;background:#232323;"></div>
<div style="position:absolute;left:811px;top:668px;width:4px;height:20px;background:#282828;"></div>
<div style="position:absolute;left:815px;top:688px;width:339px;height:18px;background:linear-gradient(#3c3c3c,#353535);box-shadow:inset 0 1px 0 #484848;"></div>
<div style="position:absolute;left:815px;top:705px;width:339px;height:1px;background:#222;"></div>
<div style="position:absolute;left:820px;top:688px;width:1px;height:17px;background:#2c2c2c;"></div>
<div style="position:absolute;left:820px;top:688px;width:39px;height:17px;border-right:1px solid #2c2c2c;"></div>
<div style="position:absolute;left:825.5px;top:692.60px;font-size:9.8px;line-height:9.8px;color:#c8c8c8;font-weight:normal;letter-spacing:0.695px;white-space:nowrap;will-change:transform;">Clear</div>
<div style="position:absolute;left:864px;top:688px;width:52px;height:17px;background:linear-gradient(#505050,#474747);border-right:1px solid #333;"></div>
<div style="position:absolute;left:868.7px;top:692.60px;font-size:9.8px;line-height:9.8px;color:#c8c8c8;font-weight:normal;letter-spacing:0.639px;white-space:nowrap;will-change:transform;">Collapse</div>
<div style="position:absolute;left:916px;top:688px;width:76px;height:17px;background:linear-gradient(#505050,#474747);border-right:1px solid #333;"></div>
<div style="position:absolute;left:922.7px;top:692.60px;font-size:9.8px;line-height:9.8px;color:#c8c8c8;font-weight:normal;letter-spacing:0.607px;white-space:nowrap;will-change:transform;">Clear on Play</div>
<div style="position:absolute;left:992px;top:688px;width:71px;height:17px;border-right:1px solid #2c2c2c;"></div>
<div style="position:absolute;left:999.3px;top:692.60px;font-size:9.8px;line-height:9.8px;color:#c8c8c8;font-weight:normal;letter-spacing:0.582px;white-space:nowrap;will-change:transform;">Error Pause</div>
<div style="position:absolute;left:1063px;top:688px;width:48px;height:17px;border-right:1px solid #2c2c2c;"></div>
<div style="position:absolute;left:1069.3px;top:692.60px;font-size:9.8px;line-height:9.8px;color:#c8c8c8;font-weight:normal;letter-spacing:0.721px;white-space:nowrap;will-change:transform;">Editor</div>
<svg style="position:absolute;left:1103px;top:697px" width="5" height="3" viewBox="0 0 5 3"><path d="M0 0H5L2.5 3Z" fill="#9a9a9a"/></svg>
<div style="position:absolute;left:815px;top:706px;width:339px;height:213px;background:#383838;"></div>
<div style="position:absolute;left:816px;top:873px;width:338px;height:1px;background:#1c1c1c;"></div>
</body></html>
